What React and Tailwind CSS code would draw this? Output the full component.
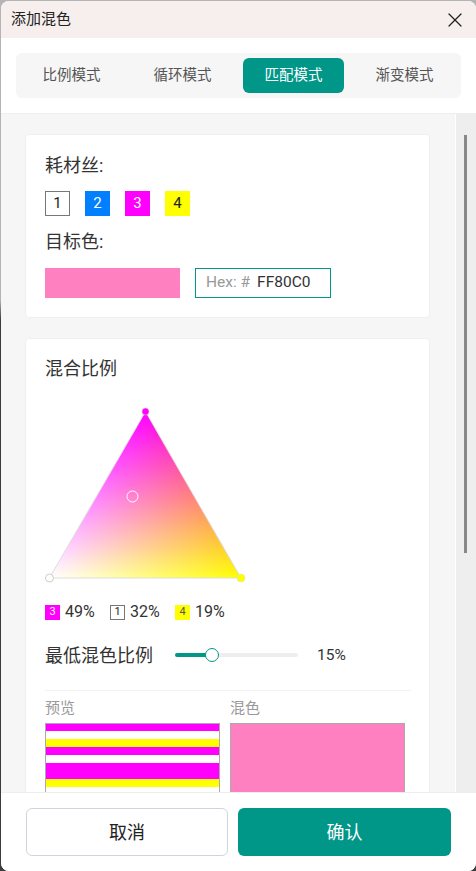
import { X } from "lucide-react";

const font = "font-['Roboto','Noto_Sans_CJK_SC',sans-serif]";

const tabs = ["比例模式", "循环模式", "匹配模式", "渐变模式"];

const filaments = [
  { id: 1, cls: "bg-white border border-[#777] text-[#222]" },
  { id: 2, cls: "bg-[#0080ff] text-white" },
  { id: 3, cls: "bg-[#ff00ff] text-white" },
  { id: 4, cls: "bg-[#ffff00] text-[#222]" },
];

const ratios = [
  { id: 3, pct: "49%", cls: "bg-[#ff00ff] text-white" },
  { id: 1, pct: "32%", cls: "bg-white border border-[#777] text-[#222]" },
  { id: 4, pct: "19%", cls: "bg-[#ffff00] text-[#555]" },
];

const stripes = [
  { h: "h-[7px]", c: "bg-[#ff00ff]" },
  { h: "h-[8px]", c: "bg-white" },
  { h: "h-[8px]", c: "bg-[#ffff00]" },
  { h: "h-[8px]", c: "bg-[#ff00ff]" },
  { h: "h-[8px]", c: "bg-white" },
  { h: "h-[16px]", c: "bg-[#ff00ff]" },
  { h: "h-[8px]", c: "bg-[#ffff00]" },
  { h: "h-[8px]", c: "bg-white" },
];

const Triangle = () => (
  <svg width="210" height="185" viewBox="0 0 210 185" className="isolate block">
    <defs>
      <linearGradient id="mg" gradientUnits="userSpaceOnUse" x1="100.5" y1="6.5" x2="100.5" y2="173">
        <stop offset="0" stopColor="#ff00ff" />
        <stop offset="1" stopColor="#ffffff" />
      </linearGradient>
      <linearGradient id="yg" gradientUnits="userSpaceOnUse" x1="196" y1="173" x2="52" y2="90">
        <stop offset="0" stopColor="#ffff00" />
        <stop offset="1" stopColor="#ffffff" />
      </linearGradient>
    </defs>
    <polygon points="100.5,6.5 4.5,173 196,173" fill="url(#mg)" />
    <polygon points="100.5,6.5 4.5,173 196,173" fill="url(#yg)" className="mix-blend-multiply" />
    <polygon points="100.5,6.5 4.5,173 196,173" fill="none" stroke="#dddddd" strokeWidth="1" />
    <circle cx="100.5" cy="6.5" r="3.5" fill="#ff00ff" stroke="#dddddd" strokeWidth="0.5" />
    <circle cx="4.5" cy="173" r="4" fill="#ffffff" stroke="#cccccc" strokeWidth="1" />
    <circle cx="196" cy="173" r="4" fill="#ffff00" stroke="#dddddd" strokeWidth="0.5" />
    <circle cx="87.5" cy="91.5" r="5.5" fill="none" stroke="#ffffff" strokeWidth="1" />
  </svg>
);

const App = () => {
  return (
    <div className={`${font} h-[871px] w-[476px] overflow-hidden bg-[linear-gradient(#b4b4b4_0,#b4b4b4_300px,#3c3c3c_320px)] pl-px pt-px`}>
      <div className="flex h-full w-full flex-col overflow-hidden rounded-[8px] bg-white">
        <div className="flex h-[37px] shrink-0 items-center justify-between bg-[#f7efed] pl-[10px] pr-[9px]">
          <span className="text-[15px] text-[#222]">添加混色</span>
          <X size={24} strokeWidth={1.2} color="#222" />
        </div>

        <div className="shrink-0 border-b border-[#eeeeee] px-[15px] pb-[15px] pt-[15px]">
          <div className="flex h-[45px] w-[445px] items-center gap-[10px] rounded-[6px] bg-[#f6f6f6] px-[5px]">
            {tabs.map((tab, i) => (
              <div
                key={tab}
                className={`flex h-[35px] w-[101px] items-center justify-center rounded-[6px] text-[14.5px] ${i === 2 ? "bg-[#009688] text-white" : "text-[#555]"}`}
              >
                {tab}
              </div>
            ))}
          </div>
        </div>

        <div className="flex min-h-0 flex-1 overflow-hidden">
          <div className="w-[454px] shrink-0 overflow-hidden bg-[#f6f6f6] pl-[24px] pt-[20px]">
            <section className="h-[184px] w-[405px] rounded-[4px] border border-[#f0f0f0] bg-white px-[19px]">
              <p className="mt-[20px] text-[18px] leading-[22px] text-[#333]">耗材丝:</p>
              <div className="mt-[14px] flex gap-[15px]">
                {filaments.map((f) => (
                  <div key={f.id} className={`flex h-[25px] w-[25px] items-center justify-center text-[15px] ${f.cls}`}>
                    {f.id}
                  </div>
                ))}
              </div>
              <p className="mt-[15px] text-[18px] leading-[22px] text-[#333]">目标色:</p>
              <div className="mt-[15px] flex gap-[15px]">
                <div className="h-[30px] w-[135px] bg-[#ff80c0]" />
                <div className="flex h-[30px] w-[136px] items-center border border-[#009688] pl-[10px] text-[15.5px]">
                  <span className="text-[#999]">Hex: #</span>
                  <span className="ml-[7px] text-[#333]">FF80C0</span>
                </div>
              </div>
            </section>

            <section className="mt-[20px] w-[405px] rounded-[4px] border border-[#f0f0f0] bg-white px-[19px] pb-[20px]">
              <p className="mt-[19px] text-[18px] leading-[22px] text-[#333]">混合比例</p>
              <div className="mt-[25px]">
                <Triangle />
              </div>
              <div className="mt-[12px] flex h-[20px] items-center gap-[15px]">
                {ratios.map((r) => (
                  <div key={r.id} className="flex items-center gap-[5px]">
                    <div className={`flex h-[15px] w-[15px] items-center justify-center text-[11px] ${r.cls}`}>{r.id}</div>
                    <span className="w-[30px] text-[16px] text-[#333]">{r.pct}</span>
                  </div>
                ))}
              </div>
              <div className="mt-[23px] flex h-[20px] items-center">
                <span className="w-[130px] text-[18px] text-[#333]">最低混色比例</span>
                <div className="relative h-[4px] w-[123px] rounded-full bg-[#eeeeee]">
                  <div className="h-full w-[37px] rounded-full bg-[#009688]" />
                  <div className="absolute left-[30px] top-[-5px] h-[14px] w-[14px] rounded-full border border-[#009688] bg-white" />
                </div>
                <span className="ml-[19px] translate-y-px text-[15.5px] text-[#333]">15%</span>
              </div>
              <div className="mt-[25px] h-px w-[366px] bg-[#f2f2f2]" />
              <div className="mt-[7px] flex gap-[10px] text-[15px] text-[#999]">
                <div className="w-[175px]">
                  <p className="leading-[20px]">预览</p>
                  <div className="mt-[5px] h-[100px] border border-[#aaaaaa]">
                    {stripes.map((s, i) => (
                      <div key={i} className={`${s.h} ${s.c}`} />
                    ))}
                  </div>
                </div>
                <div className="w-[175px]">
                  <p className="leading-[20px]">混色</p>
                  <div className="mt-[5px] h-[100px] border border-[#aaaaaa] bg-[#ff80c0]" />
                </div>
              </div>
            </section>
          </div>
          <div className="w-px shrink-0 bg-white" />
          <div className="flex-1 bg-[#eeeeee] pl-[8px] pt-[21px]">
            <div className="h-[418px] w-[3px] bg-[#888888]" />
          </div>
        </div>

        <div className="flex h-[79px] shrink-0 gap-[10px] border-t border-[#eeeeee] bg-white pl-[25px] pt-[15px]">
          <button className="h-[48px] w-[202px] rounded-[6px] border border-[#d0d5dd] bg-white text-[18px] text-[#222]">取消</button>
          <button className="h-[48px] w-[213px] rounded-[6px] bg-[#009688] text-[18px] text-white">确认</button>
        </div>
      </div>
    </div>
  );
};

export default App;
